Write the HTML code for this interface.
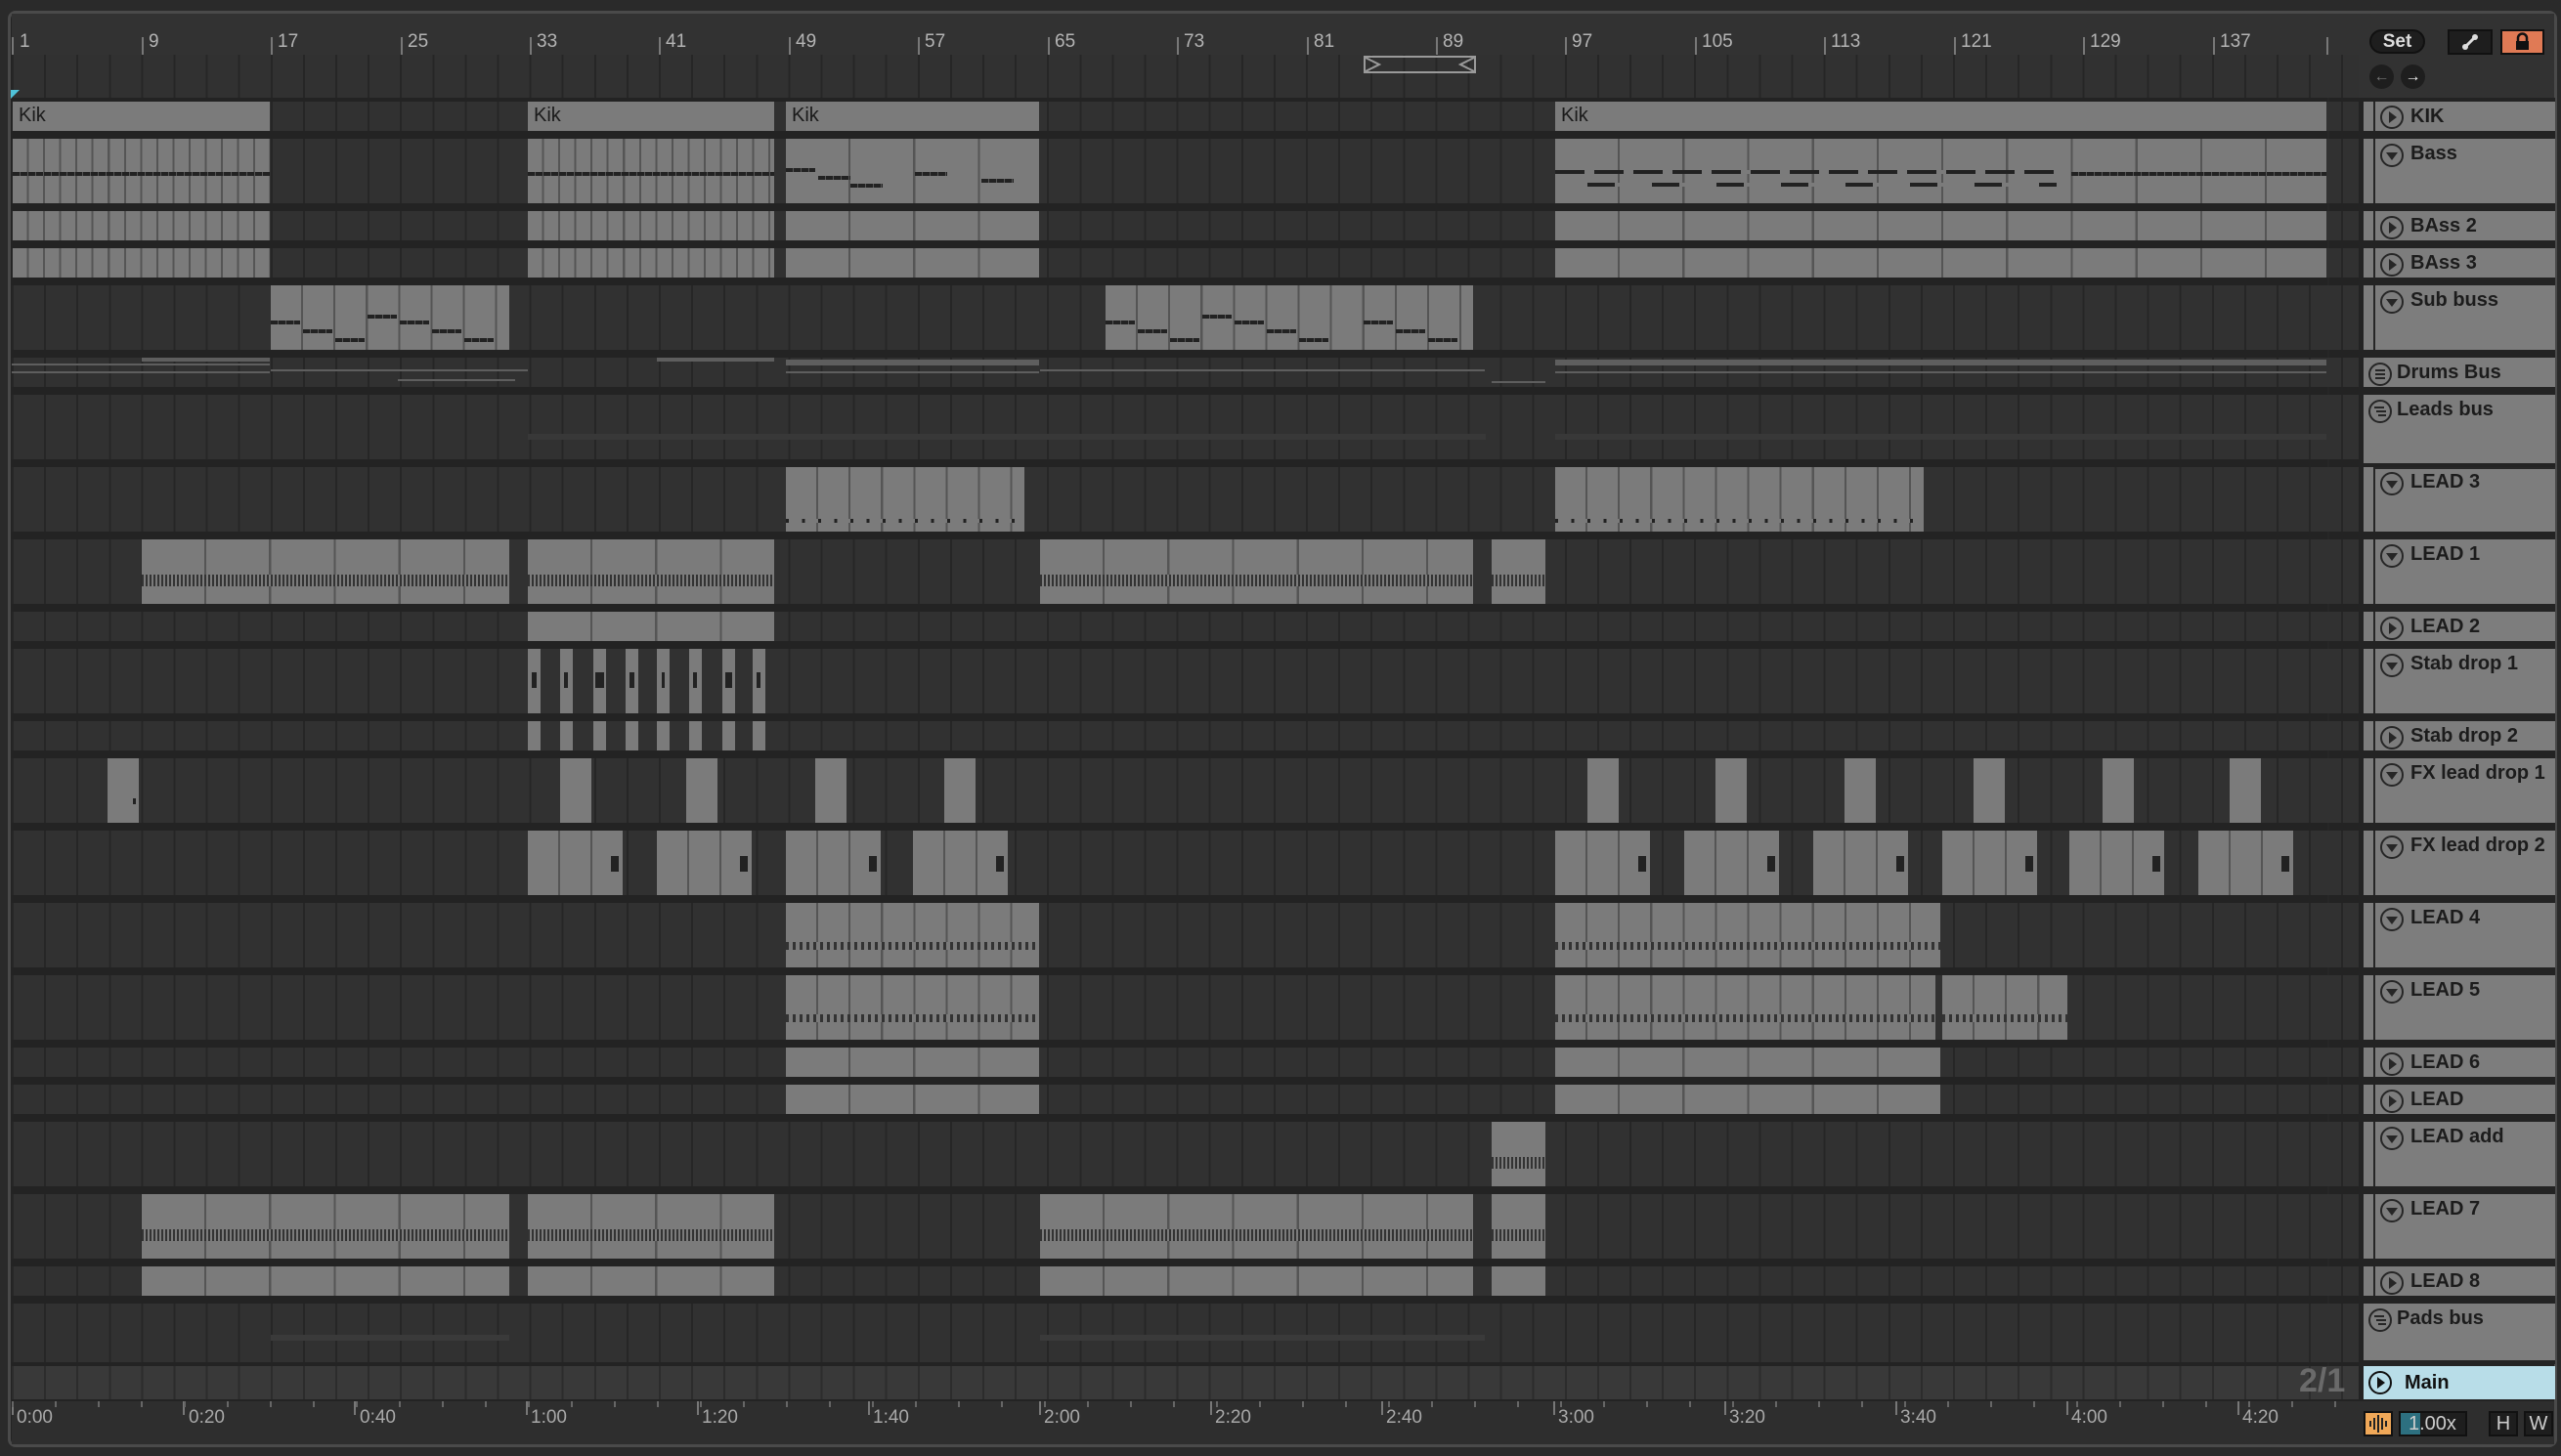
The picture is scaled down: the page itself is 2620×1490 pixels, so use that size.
<!DOCTYPE html>
<html><head><meta charset="utf-8"><style>
*{margin:0;padding:0;box-sizing:border-box}
body{width:2620px;height:1490px;background:#2a2a2a;position:relative;overflow:hidden;font-family:"Liberation Sans",sans-serif}
.abs{position:absolute}
#frame{position:absolute;left:8px;top:11px;width:2608px;height:1470px;border:3px solid #4a4a4a;border-radius:8px;background:#232323}
.grid{background:repeating-linear-gradient(90deg,#262626 0 2px,#313131 2px 33.1px)}
.row{position:absolute;left:12px;width:2401px}
.c{position:absolute;top:0;bottom:0;background:#7b7b7b;overflow:hidden}
.b4{background-image:repeating-linear-gradient(90deg,transparent 0 64px,#555 64px 66.2px)}
.b1{background-image:repeating-linear-gradient(90deg,transparent 0 14.5px,#555 14.5px 16.55px)}
.b2{background-image:repeating-linear-gradient(90deg,transparent 0 31px,#555 31px 33.1px)}
.nt{position:absolute;left:0;right:0;height:4px;background:repeating-linear-gradient(90deg,#222 0 7px,#555 7px 8px)}
.dn{position:absolute;left:0;right:0;top:55%;height:12px;background:repeating-linear-gradient(90deg,#333 0 2px,#7b7b7b 2px 4px)}
.lbl{position:absolute;left:6px;top:3px;font-size:20px;color:#1a1a1a}
.hd{position:absolute;left:2418px;width:196px;background:#7d7d7d}
.hd.n{border-left:10px solid #7d7d7d;box-shadow:inset 2px 0 0 #262626}
.hd span{position:absolute;top:4px;font-size:20px;font-weight:bold;color:#1c1c1c;white-space:nowrap}
.hd svg{position:absolute;top:4px}
.rl{position:absolute;top:32px;font-size:19px;color:#b4b4b4}
.tk{position:absolute;width:2px;background:#777}
.tl{position:absolute;top:1440px;font-size:19px;color:#a8a8a8}
.ln{position:absolute;height:2px;background:#5e5e5e}
</style></head><body>
<div id="frame"></div>
<!-- top ruler -->
<div class="abs" style="left:12px;top:14px;width:2401px;height:86px;background:#323232"></div>
<div class="abs grid" style="left:12px;top:56px;width:2401px;height:44px"></div>
<div class="abs" style="left:2413px;top:14px;width:200px;height:86px;background:#323232"></div>
<div class="rl" style="left:20px">1</div><div class="rl" style="left:152px">9</div><div class="rl" style="left:284px">17</div><div class="rl" style="left:417px">25</div><div class="rl" style="left:549px">33</div><div class="rl" style="left:681px">41</div><div class="rl" style="left:814px">49</div><div class="rl" style="left:946px">57</div><div class="rl" style="left:1079px">65</div><div class="rl" style="left:1211px">73</div><div class="rl" style="left:1344px">81</div><div class="rl" style="left:1476px">89</div><div class="rl" style="left:1608px">97</div><div class="rl" style="left:1741px">105</div><div class="rl" style="left:1873px">113</div><div class="rl" style="left:2006px">121</div><div class="rl" style="left:2138px">129</div><div class="rl" style="left:2271px">137</div>
<div class="tk" style="left:12px;top:38px;height:18px"></div><div class="tk" style="left:145px;top:38px;height:18px"></div><div class="tk" style="left:277px;top:38px;height:18px"></div><div class="tk" style="left:410px;top:38px;height:18px"></div><div class="tk" style="left:542px;top:38px;height:18px"></div><div class="tk" style="left:674px;top:38px;height:18px"></div><div class="tk" style="left:807px;top:38px;height:18px"></div><div class="tk" style="left:939px;top:38px;height:18px"></div><div class="tk" style="left:1072px;top:38px;height:18px"></div><div class="tk" style="left:1204px;top:38px;height:18px"></div><div class="tk" style="left:1337px;top:38px;height:18px"></div><div class="tk" style="left:1469px;top:38px;height:18px"></div><div class="tk" style="left:1601px;top:38px;height:18px"></div><div class="tk" style="left:1734px;top:38px;height:18px"></div><div class="tk" style="left:1866px;top:38px;height:18px"></div><div class="tk" style="left:1999px;top:38px;height:18px"></div><div class="tk" style="left:2131px;top:38px;height:18px"></div><div class="tk" style="left:2264px;top:38px;height:18px"></div><div class="tk" style="left:2380px;top:38px;height:18px"></div>
<svg class="abs" style="left:1395px;top:56px" width="116" height="20"><rect x="1" y="2" width="113" height="16" fill="none" stroke="#9a9a9a" stroke-width="2"/><path d="M2 3 L16 10 L2 17 M113 3 L99 10 L113 17" fill="none" stroke="#9a9a9a" stroke-width="2"/></svg>
<svg class="abs" style="left:11px;top:92px" width="10" height="10"><path d="M0 0 L9 0 L0 9Z" fill="#4fc3d9"/></svg>
<!-- Set buttons -->
<div class="abs" style="left:2424px;top:30px;width:57px;height:25px;border-radius:13px;background:#1e1e1e;border:2px solid #111;color:#ddd;font-size:19px;font-weight:bold;text-align:center;line-height:21px">Set</div>
<div class="abs" style="left:2504px;top:30px;width:46px;height:26px;background:#1e1e1e;border:2px solid #111"><svg width="42" height="22"><path d="M16 16 L26 6" stroke="#ddd" stroke-width="3"/><circle cx="16" cy="16" r="3" fill="#ddd"/><circle cx="26" cy="6" r="3" fill="#ddd"/></svg></div>
<div class="abs" style="left:2558px;top:30px;width:45px;height:26px;background:#e07a55;border:2px solid #111"><svg width="41" height="22"><rect x="14" y="10" width="13" height="9" fill="#111"/><path d="M16 10 V7 a4.5 4.5 0 0 1 9 0 V10" fill="none" stroke="#111" stroke-width="2.5"/></svg></div>
<div class="abs" style="left:2424px;top:66px;width:25px;height:25px;border-radius:50%;background:#1e1e1e;color:#777;font-size:16px;text-align:center;line-height:25px">&#8592;</div>
<div class="abs" style="left:2456px;top:66px;width:25px;height:25px;border-radius:50%;background:#1e1e1e;color:#eee;font-size:16px;text-align:center;line-height:25px">&#8594;</div>
<!-- grid column right of arrangement -->
<div class="abs" style="left:2381px;top:100px;width:2px;height:1300px;background:#262626"></div>

<!-- rows -->
<div class="row grid" style="top:104px;height:30px">
<div class="c" style="left:1px;width:263px"><div class="lbl">Kik</div></div><div class="c" style="left:528px;width:252px"><div class="lbl">Kik</div></div><div class="c" style="left:792px;width:259px"><div class="lbl">Kik</div></div><div class="c" style="left:1579px;width:789px"><div class="lbl">Kik</div></div></div>
<div class="row grid" style="top:142px;height:66px">
<div class="c b1" style="left:1px;width:263px"><div class="nt" style="top:52%"></div></div><div class="c b1" style="left:528px;width:252px"><div class="nt" style="top:52%"></div></div><div class="c b4" style="left:792px;width:259px"><div class="nt" style="top:45%;width:30px"></div><div class="nt" style="top:58%;left:33px;width:33px"></div><div class="nt" style="top:70%;left:66px;width:33px"></div><div class="nt" style="top:52%;left:132px;width:33px"></div><div class="nt" style="top:62%;left:200px;width:33px"></div></div><div class="c b4" style="left:1579px;width:789px"><div class="nt" style="top:48%;width:520px;background:repeating-linear-gradient(90deg,#222 0 30px,#7b7b7b 30px 40px)"></div><div class="nt" style="top:68%;left:33px;width:480px;background:repeating-linear-gradient(90deg,#222 0 28px,#7b7b7b 28px 66px)"></div><div class="nt" style="top:52%;left:528px;width:261px"></div></div></div>
<div class="row grid" style="top:216px;height:30px">
<div class="c b1" style="left:1px;width:263px"></div><div class="c b1" style="left:528px;width:252px"></div><div class="c b4" style="left:792px;width:259px"></div><div class="c b4" style="left:1579px;width:789px"></div></div>
<div class="row grid" style="top:254px;height:30px">
<div class="c b1" style="left:1px;width:263px"></div><div class="c b1" style="left:528px;width:252px"></div><div class="c b4" style="left:792px;width:259px"></div><div class="c b4" style="left:1579px;width:789px"></div></div>
<div class="row grid" style="top:292px;height:66px">
<div class="c b2" style="left:265px;width:244px"><div class="nt" style="top:55%;width:30px"></div><div class="nt" style="top:68%;left:33px;width:30px"></div><div class="nt" style="top:82%;left:66px;width:30px"></div><div class="nt" style="top:45%;left:99px;width:30px"></div><div class="nt" style="top:55%;left:132px;width:30px"></div><div class="nt" style="top:68%;left:165px;width:30px"></div><div class="nt" style="top:82%;left:198px;width:30px"></div></div><div class="c b2" style="left:1119px;width:376px"><div class="nt" style="top:55%;width:30px"></div><div class="nt" style="top:68%;left:33px;width:30px"></div><div class="nt" style="top:82%;left:66px;width:30px"></div><div class="nt" style="top:45%;left:99px;width:30px"></div><div class="nt" style="top:55%;left:132px;width:30px"></div><div class="nt" style="top:68%;left:165px;width:30px"></div><div class="nt" style="top:82%;left:198px;width:30px"></div><div class="nt" style="top:55%;left:264px;width:30px"></div><div class="nt" style="top:68%;left:297px;width:30px"></div><div class="nt" style="top:82%;left:330px;width:30px"></div></div></div>
<div class="row grid" style="top:366px;height:30px">
<div class="ln" style="left:0;top:6px;width:264px"></div><div class="ln" style="left:0;top:14px;width:264px"></div><div class="ln" style="left:133px;top:0;width:131px;height:4px"></div><div class="ln" style="left:265px;top:12px;width:263px"></div><div class="ln" style="left:395px;top:22px;width:120px"></div><div class="ln" style="left:660px;top:0;width:120px;height:4px"></div><div class="ln" style="left:792px;top:2px;width:259px;height:6px"></div><div class="ln" style="left:792px;top:14px;width:259px"></div><div class="ln" style="left:1052px;top:12px;width:455px"></div><div class="ln" style="left:1514px;top:24px;width:55px"></div><div class="ln" style="left:1579px;top:2px;width:789px;height:6px"></div><div class="ln" style="left:1579px;top:14px;width:789px"></div></div>
<div class="row grid" style="top:404px;height:66px"><div class="ln" style="left:528px;top:40px;width:980px;background:#383838;height:6px"></div><div class="ln" style="left:1579px;top:40px;width:789px;background:#383838;height:6px"></div></div>
<div class="row grid" style="top:478px;height:66px">
<div class="c b2" style="left:792px;width:244px"><div class="nt" style="top:80%;background:repeating-linear-gradient(90deg,#222 0 3px,#7b7b7b 3px 16.5px)"></div></div><div class="c b2" style="left:1579px;width:377px"><div class="nt" style="top:80%;background:repeating-linear-gradient(90deg,#222 0 3px,#7b7b7b 3px 16.5px)"></div></div></div>
<div class="row grid" style="top:552px;height:66px">
<div class="c b4" style="left:133px;width:376px"><div class="dn"></div></div><div class="c b4" style="left:528px;width:252px"><div class="dn"></div></div><div class="c b4" style="left:1052px;width:443px"><div class="dn"></div></div><div class="c" style="left:1514px;width:55px"><div class="dn"></div></div></div>
<div class="row grid" style="top:626px;height:30px">
<div class="c b4" style="left:528px;width:252px"></div></div>
<div class="row grid" style="top:664px;height:66px">
<div class="c" style="left:528px;width:13px"><div class="abs" style="left:4px;top:36%;width:5px;height:16px;background:#222"></div></div><div class="c" style="left:561px;width:13px"><div class="abs" style="left:4px;top:36%;width:4px;height:16px;background:#222"></div></div><div class="c" style="left:595px;width:13px"><div class="abs" style="left:2px;top:36%;width:9px;height:16px;background:#222"></div></div><div class="c" style="left:628px;width:13px"><div class="abs" style="left:4px;top:36%;width:5px;height:16px;background:#222"></div></div><div class="c" style="left:660px;width:13px"><div class="abs" style="left:5px;top:36%;width:3px;height:16px;background:#222"></div></div><div class="c" style="left:693px;width:13px"><div class="abs" style="left:4px;top:36%;width:4px;height:16px;background:#222"></div></div><div class="c" style="left:727px;width:13px"><div class="abs" style="left:3px;top:36%;width:7px;height:16px;background:#222"></div></div><div class="c" style="left:758px;width:13px"><div class="abs" style="left:4px;top:36%;width:4px;height:16px;background:#222"></div></div></div>
<div class="row grid" style="top:738px;height:30px">
<div class="c" style="left:528px;width:13px"></div><div class="c" style="left:561px;width:13px"></div><div class="c" style="left:595px;width:13px"></div><div class="c" style="left:628px;width:13px"></div><div class="c" style="left:660px;width:13px"></div><div class="c" style="left:693px;width:13px"></div><div class="c" style="left:727px;width:13px"></div><div class="c" style="left:758px;width:13px"></div></div>
<div class="row grid" style="top:776px;height:66px">
<div class="c" style="left:98px;width:32px"><div class="abs" style="left:26px;top:62%;width:3px;height:6px;background:#222"></div></div><div class="c" style="left:561px;width:32px"></div><div class="c" style="left:690px;width:32px"></div><div class="c" style="left:822px;width:32px"></div><div class="c" style="left:954px;width:32px"></div><div class="c" style="left:1612px;width:32px"></div><div class="c" style="left:1743px;width:32px"></div><div class="c" style="left:1875px;width:32px"></div><div class="c" style="left:2007px;width:32px"></div><div class="c" style="left:2139px;width:32px"></div><div class="c" style="left:2269px;width:32px"></div></div>
<div class="row grid" style="top:850px;height:66px">
<div class="c b2" style="left:528px;width:97px"><div class="abs" style="right:4px;top:40%;width:8px;height:16px;background:#222"></div></div><div class="c b2" style="left:660px;width:97px"><div class="abs" style="right:4px;top:40%;width:8px;height:16px;background:#222"></div></div><div class="c b2" style="left:792px;width:97px"><div class="abs" style="right:4px;top:40%;width:8px;height:16px;background:#222"></div></div><div class="c b2" style="left:922px;width:97px"><div class="abs" style="right:4px;top:40%;width:8px;height:16px;background:#222"></div></div><div class="c b2" style="left:1579px;width:97px"><div class="abs" style="right:4px;top:40%;width:8px;height:16px;background:#222"></div></div><div class="c b2" style="left:1711px;width:97px"><div class="abs" style="right:4px;top:40%;width:8px;height:16px;background:#222"></div></div><div class="c b2" style="left:1843px;width:97px"><div class="abs" style="right:4px;top:40%;width:8px;height:16px;background:#222"></div></div><div class="c b2" style="left:1975px;width:97px"><div class="abs" style="right:4px;top:40%;width:8px;height:16px;background:#222"></div></div><div class="c b2" style="left:2105px;width:97px"><div class="abs" style="right:4px;top:40%;width:8px;height:16px;background:#222"></div></div><div class="c b2" style="left:2237px;width:97px"><div class="abs" style="right:4px;top:40%;width:8px;height:16px;background:#222"></div></div></div>
<div class="row grid" style="top:924px;height:66px">
<div class="c b2" style="left:792px;width:259px"><div class="dn" style="top:60%;height:8px;background:repeating-linear-gradient(90deg,#333 0 3px,#7b7b7b 3px 7px)"></div></div><div class="c b2" style="left:1579px;width:394px"><div class="dn" style="top:60%;height:8px;background:repeating-linear-gradient(90deg,#333 0 3px,#7b7b7b 3px 7px)"></div></div></div>
<div class="row grid" style="top:998px;height:66px">
<div class="c b2" style="left:792px;width:259px"><div class="dn" style="top:60%;height:8px;background:repeating-linear-gradient(90deg,#333 0 3px,#7b7b7b 3px 7px)"></div></div><div class="c b2" style="left:1579px;width:389px"><div class="dn" style="top:60%;height:8px;background:repeating-linear-gradient(90deg,#333 0 3px,#7b7b7b 3px 7px)"></div></div><div class="c b2" style="left:1975px;width:128px"><div class="dn" style="top:60%;height:8px;background:repeating-linear-gradient(90deg,#333 0 3px,#7b7b7b 3px 7px)"></div></div></div>
<div class="row grid" style="top:1072px;height:30px">
<div class="c b4" style="left:792px;width:259px"></div><div class="c b4" style="left:1579px;width:394px"></div></div>
<div class="row grid" style="top:1110px;height:30px">
<div class="c b4" style="left:792px;width:259px"></div><div class="c b4" style="left:1579px;width:394px"></div></div>
<div class="row grid" style="top:1148px;height:66px">
<div class="c" style="left:1514px;width:55px"><div class="dn" style="top:55%"></div></div></div>
<div class="row grid" style="top:1222px;height:66px">
<div class="c b4" style="left:133px;width:376px"><div class="dn"></div></div><div class="c b4" style="left:528px;width:252px"><div class="dn"></div></div><div class="c b4" style="left:1052px;width:443px"><div class="dn"></div></div><div class="c" style="left:1514px;width:55px"><div class="dn"></div></div></div>
<div class="row grid" style="top:1296px;height:30px">
<div class="c b4" style="left:133px;width:376px"></div><div class="c b4" style="left:528px;width:252px"></div><div class="c b4" style="left:1052px;width:443px"></div><div class="c" style="left:1514px;width:55px"></div></div>
<div class="row grid" style="top:1334px;height:60px"><div class="ln" style="left:265px;top:32px;width:244px;background:#3a3a3a;height:6px"></div><div class="ln" style="left:1052px;top:32px;width:455px;background:#3a3a3a;height:6px"></div></div>
<div class="row" style="top:1398px;height:34px;background:repeating-linear-gradient(90deg,#2c2c2c 0 2px,#393939 2px 33.1px)"></div>
<div class="abs" style="left:2352px;top:1394px;font-size:34px;font-weight:bold;color:#6a6a6a">2/1</div>
<!-- headers -->
<div class="abs" style="left:2418px;top:100px;width:196px;height:1296px;background:#232323"></div>
<div class="hd" style="top:104px;height:30px;border-left:10px solid #7d7d7d;box-shadow:inset 2px 0 0 #262626"><svg style="left:6px;top:3px" width="26" height="26"><circle cx="13" cy="13" r="11" fill="none" stroke="#262626" stroke-width="2"/><path d="M10 7 L18 13 L10 19Z" fill="#262626"/></svg><span style="left:38px">KIK</span></div>
<div class="hd n" style="top:142px;height:66px"><svg style="left:6px" width="26" height="26"><circle cx="13" cy="13" r="11" fill="none" stroke="#262626" stroke-width="2"/><path d="M7 10 L19 10 L13 18Z" fill="#262626"/></svg><span style="left:38px">Bass</span></div>
<div class="hd n" style="top:216px;height:30px"><svg style="left:6px" width="26" height="26"><circle cx="13" cy="13" r="11" fill="none" stroke="#262626" stroke-width="2"/><path d="M10 7 L18 13 L10 19Z" fill="#262626"/></svg><span style="left:38px">BAss 2</span></div>
<div class="hd n" style="top:254px;height:30px"><svg style="left:6px" width="26" height="26"><circle cx="13" cy="13" r="11" fill="none" stroke="#262626" stroke-width="2"/><path d="M10 7 L18 13 L10 19Z" fill="#262626"/></svg><span style="left:38px">BAss 3</span></div>
<div class="hd n" style="top:292px;height:66px"><svg style="left:6px" width="26" height="26"><circle cx="13" cy="13" r="11" fill="none" stroke="#262626" stroke-width="2"/><path d="M7 10 L19 10 L13 18Z" fill="#262626"/></svg><span style="left:38px">Sub buss</span></div>
<div class="hd" style="top:366px;height:30px"><svg style="left:4px" width="26" height="26"><circle cx="13" cy="13" r="11" fill="none" stroke="#262626" stroke-width="2"/><path d="M8 9 H18 M8 13 H18 M8 17 H18" stroke="#262626" stroke-width="2"/></svg><span style="left:34px">Drums Bus</span></div>
<div class="hd" style="top:404px;height:70px"><svg style="left:4px" width="26" height="26"><circle cx="13" cy="13" r="11" fill="none" stroke="#262626" stroke-width="2"/><path d="M7 9 H17 M9 13 H19 M11 17 H19" stroke="#262626" stroke-width="2"/></svg><span style="left:34px">Leads bus</span></div>
<div class="hd n" style="top:478px;height:66px;box-shadow:inset 2px 2px 0 #262626"><svg style="left:6px" width="26" height="26"><circle cx="13" cy="13" r="11" fill="none" stroke="#262626" stroke-width="2"/><path d="M7 10 L19 10 L13 18Z" fill="#262626"/></svg><span style="left:38px">LEAD 3</span></div>
<div class="hd n" style="top:552px;height:66px"><svg style="left:6px" width="26" height="26"><circle cx="13" cy="13" r="11" fill="none" stroke="#262626" stroke-width="2"/><path d="M7 10 L19 10 L13 18Z" fill="#262626"/></svg><span style="left:38px">LEAD 1</span></div>
<div class="hd n" style="top:626px;height:30px"><svg style="left:6px" width="26" height="26"><circle cx="13" cy="13" r="11" fill="none" stroke="#262626" stroke-width="2"/><path d="M10 7 L18 13 L10 19Z" fill="#262626"/></svg><span style="left:38px">LEAD 2</span></div>
<div class="hd n" style="top:664px;height:66px"><svg style="left:6px" width="26" height="26"><circle cx="13" cy="13" r="11" fill="none" stroke="#262626" stroke-width="2"/><path d="M7 10 L19 10 L13 18Z" fill="#262626"/></svg><span style="left:38px">Stab drop 1</span></div>
<div class="hd n" style="top:738px;height:30px"><svg style="left:6px" width="26" height="26"><circle cx="13" cy="13" r="11" fill="none" stroke="#262626" stroke-width="2"/><path d="M10 7 L18 13 L10 19Z" fill="#262626"/></svg><span style="left:38px">Stab drop 2</span></div>
<div class="hd n" style="top:776px;height:66px"><svg style="left:6px" width="26" height="26"><circle cx="13" cy="13" r="11" fill="none" stroke="#262626" stroke-width="2"/><path d="M7 10 L19 10 L13 18Z" fill="#262626"/></svg><span style="left:38px">FX lead drop 1</span></div>
<div class="hd n" style="top:850px;height:66px"><svg style="left:6px" width="26" height="26"><circle cx="13" cy="13" r="11" fill="none" stroke="#262626" stroke-width="2"/><path d="M7 10 L19 10 L13 18Z" fill="#262626"/></svg><span style="left:38px">FX lead drop 2</span></div>
<div class="hd n" style="top:924px;height:66px"><svg style="left:6px" width="26" height="26"><circle cx="13" cy="13" r="11" fill="none" stroke="#262626" stroke-width="2"/><path d="M7 10 L19 10 L13 18Z" fill="#262626"/></svg><span style="left:38px">LEAD 4</span></div>
<div class="hd n" style="top:998px;height:66px"><svg style="left:6px" width="26" height="26"><circle cx="13" cy="13" r="11" fill="none" stroke="#262626" stroke-width="2"/><path d="M7 10 L19 10 L13 18Z" fill="#262626"/></svg><span style="left:38px">LEAD 5</span></div>
<div class="hd n" style="top:1072px;height:30px"><svg style="left:6px" width="26" height="26"><circle cx="13" cy="13" r="11" fill="none" stroke="#262626" stroke-width="2"/><path d="M10 7 L18 13 L10 19Z" fill="#262626"/></svg><span style="left:38px">LEAD 6</span></div>
<div class="hd n" style="top:1110px;height:30px"><svg style="left:6px" width="26" height="26"><circle cx="13" cy="13" r="11" fill="none" stroke="#262626" stroke-width="2"/><path d="M10 7 L18 13 L10 19Z" fill="#262626"/></svg><span style="left:38px">LEAD</span></div>
<div class="hd n" style="top:1148px;height:66px"><svg style="left:6px" width="26" height="26"><circle cx="13" cy="13" r="11" fill="none" stroke="#262626" stroke-width="2"/><path d="M7 10 L19 10 L13 18Z" fill="#262626"/></svg><span style="left:38px">LEAD add</span></div>
<div class="hd n" style="top:1222px;height:66px"><svg style="left:6px" width="26" height="26"><circle cx="13" cy="13" r="11" fill="none" stroke="#262626" stroke-width="2"/><path d="M7 10 L19 10 L13 18Z" fill="#262626"/></svg><span style="left:38px">LEAD 7</span></div>
<div class="hd n" style="top:1296px;height:30px"><svg style="left:6px" width="26" height="26"><circle cx="13" cy="13" r="11" fill="none" stroke="#262626" stroke-width="2"/><path d="M10 7 L18 13 L10 19Z" fill="#262626"/></svg><span style="left:38px">LEAD 8</span></div>
<div class="hd" style="top:1334px;height:58px"><svg style="left:4px" width="26" height="26"><circle cx="13" cy="13" r="11" fill="none" stroke="#262626" stroke-width="2"/><path d="M7 9 H17 M9 13 H19 M11 17 H19" stroke="#262626" stroke-width="2"/></svg><span style="left:34px">Pads bus</span></div>
<div class="hd" style="top:1398px;height:34px;background:#b8dde8"><svg style="left:4px;top:4px" width="26" height="26"><circle cx="13" cy="13" r="11" fill="none" stroke="#111" stroke-width="2"/><path d="M10 7 L18 13 L10 19Z" fill="#111"/></svg><span style="left:42px;top:6px;color:#111">Main</span></div>
<!-- bottom ruler -->
<div class="abs" style="left:12px;top:1434px;width:2401px;height:44px;background:#2e2e2e"></div>
<div class="abs" style="left:2413px;top:1434px;width:200px;height:44px;background:#2e2e2e"></div>
<div class="tk" style="left:12px;top:1434px;height:14px"></div><div class="tk" style="left:187px;top:1434px;height:14px"></div><div class="tk" style="left:362px;top:1434px;height:14px"></div><div class="tk" style="left:538px;top:1434px;height:14px"></div><div class="tk" style="left:713px;top:1434px;height:14px"></div><div class="tk" style="left:888px;top:1434px;height:14px"></div><div class="tk" style="left:1063px;top:1434px;height:14px"></div><div class="tk" style="left:1238px;top:1434px;height:14px"></div><div class="tk" style="left:1413px;top:1434px;height:14px"></div><div class="tk" style="left:1589px;top:1434px;height:14px"></div><div class="tk" style="left:1764px;top:1434px;height:14px"></div><div class="tk" style="left:1939px;top:1434px;height:14px"></div><div class="tk" style="left:2114px;top:1434px;height:14px"></div><div class="tk" style="left:2289px;top:1434px;height:14px"></div>
<div class="abs" style="left:12px;top:1434px;width:2401px;height:6px;background:repeating-linear-gradient(90deg,#666 0 2px,transparent 2px 44px)"></div>
<div class="tl" style="left:17px">0:00</div><div class="tl" style="left:193px">0:20</div><div class="tl" style="left:368px">0:40</div><div class="tl" style="left:543px">1:00</div><div class="tl" style="left:718px">1:20</div><div class="tl" style="left:893px">1:40</div><div class="tl" style="left:1068px">2:00</div><div class="tl" style="left:1243px">2:20</div><div class="tl" style="left:1418px">2:40</div><div class="tl" style="left:1594px">3:00</div><div class="tl" style="left:1769px">3:20</div><div class="tl" style="left:1944px">3:40</div><div class="tl" style="left:2119px">4:00</div><div class="tl" style="left:2294px">4:20</div>
<div class="abs" style="left:2418px;top:1444px;width:30px;height:26px;background:#f0a858;border:2px solid #111"><svg width="26" height="22"><path d="M5 8V14 M9 5V17 M13 2V20 M17 5V17 M21 8V14" stroke="#222" stroke-width="2"/></svg></div>
<div class="abs" style="left:2454px;top:1444px;width:70px;height:26px;background:#1e1e1e;border:2px solid #111;color:#ccc;font-size:20px;line-height:22px;padding-left:8px"><div class="abs" style="left:0;top:0;width:20px;height:22px;background:#2d7080"></div><span style="position:relative">1.00x</span></div>
<div class="abs" style="left:2546px;top:1444px;width:30px;height:26px;background:#1e1e1e;border:2px solid #111;color:#ccc;font-size:20px;text-align:center;line-height:22px">H</div>
<div class="abs" style="left:2582px;top:1444px;width:30px;height:26px;background:#1e1e1e;border:2px solid #111;color:#ccc;font-size:20px;text-align:center;line-height:22px">W</div>
</body></html>
